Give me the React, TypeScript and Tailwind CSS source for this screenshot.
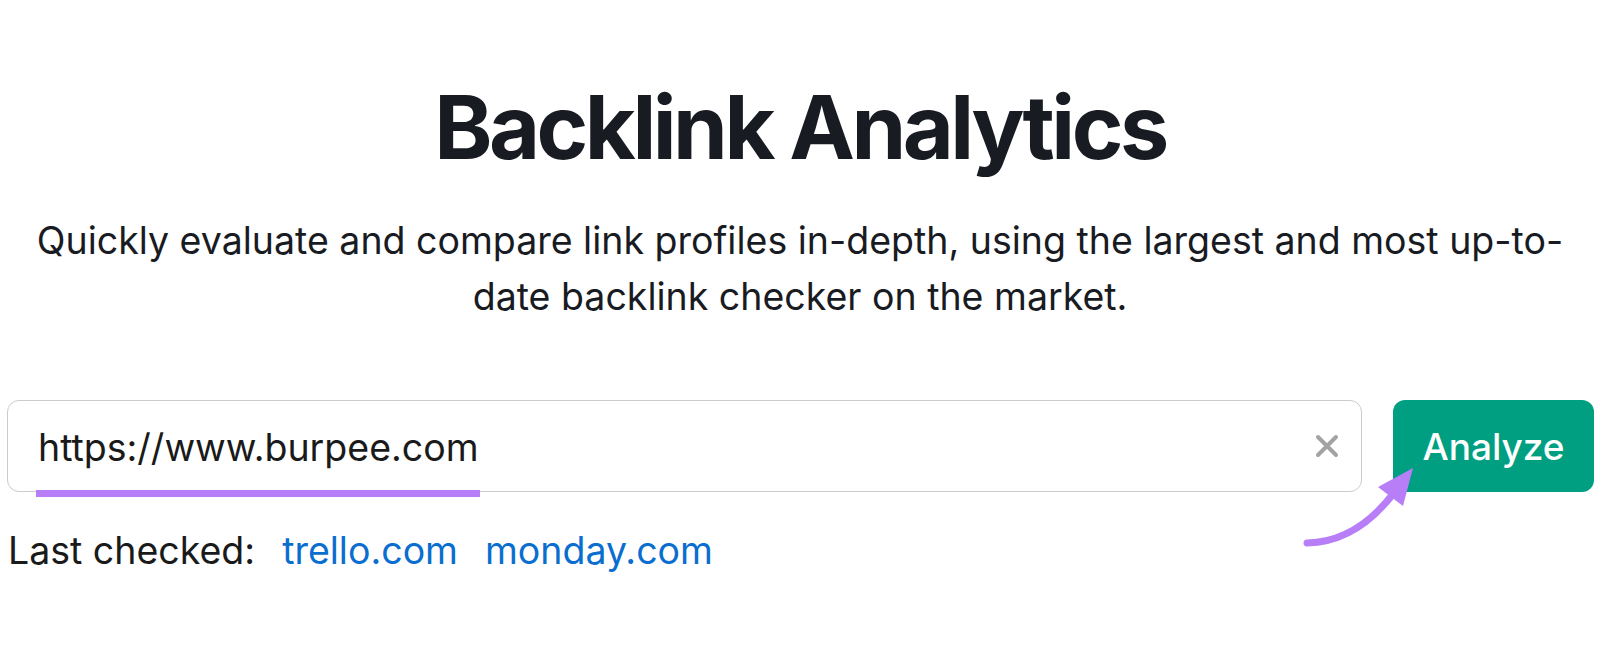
import React from "react";

export default function App() {
  return (
    <div
      className="relative w-[1600px] h-[670px] bg-white flex flex-col overflow-hidden"
      style={{ fontFamily: "Inter, 'Noto Sans', sans-serif" }}
    >
      <h1 className="mt-[77px] text-center text-[88px] leading-[100px] font-bold tracking-[-3.5px] text-[#191b23]">
        Backlink Analytics
      </h1>
      <p className="mt-[36px] text-center text-[37.5px] leading-[56px] text-[#191b23]">
        Quickly evaluate and compare link profiles in-depth, using the largest and most up-to-
        <br />
        date backlink checker on the market.
      </p>

      <div className="mt-[75px] flex items-stretch gap-[31px] pl-[7px] pr-[6px]">
        <div className="relative flex h-[92px] flex-1 items-center rounded-[12px] border border-[#cbcbcf] pl-[30px] pr-[22px]">
          <span className="flex-1 pt-[4px] text-[37.5px] text-[#1a1a1a]">https://www.burpee.com</span>
          <svg width="24" height="24" viewBox="0 0 24 24" className="shrink-0">
            <path d="M3 3 L21 21 M21 3 L3 21" stroke="#a3a3a3" strokeWidth="4" strokeLinecap="round" />
          </svg>
          <div className="absolute left-[28px] top-[89px] h-[7px] w-[444px] bg-[#b77ef7]" />
        </div>
        <button className="flex h-[92px] w-[201px] shrink-0 items-center justify-center rounded-[12px] bg-[#009f81] pt-[2px] text-[37px] font-medium text-white">
          Analyze
        </button>
      </div>

      <div className="mt-[31px] flex items-center gap-[27px] pl-[8px] text-[37.5px] leading-[56px]">
        <span className="text-[#1a1a1a]">Last checked:</span>
        <span className="text-[#0a6ecf]">trello.com</span>
        <span className="text-[#0a6ecf]">monday.com</span>
      </div>

      <svg
        className="pointer-events-none absolute left-0 top-0"
        width="1600"
        height="670"
        viewBox="0 0 1600 670"
      >
        <path
          d="M1307 543 Q1356 542 1393 494"
          fill="none"
          stroke="#b77ef7"
          strokeWidth="7"
          strokeLinecap="round"
        />
        <polygon points="1413,468 1378,487 1403,506" fill="#b77ef7" />
      </svg>
    </div>
  );
}
